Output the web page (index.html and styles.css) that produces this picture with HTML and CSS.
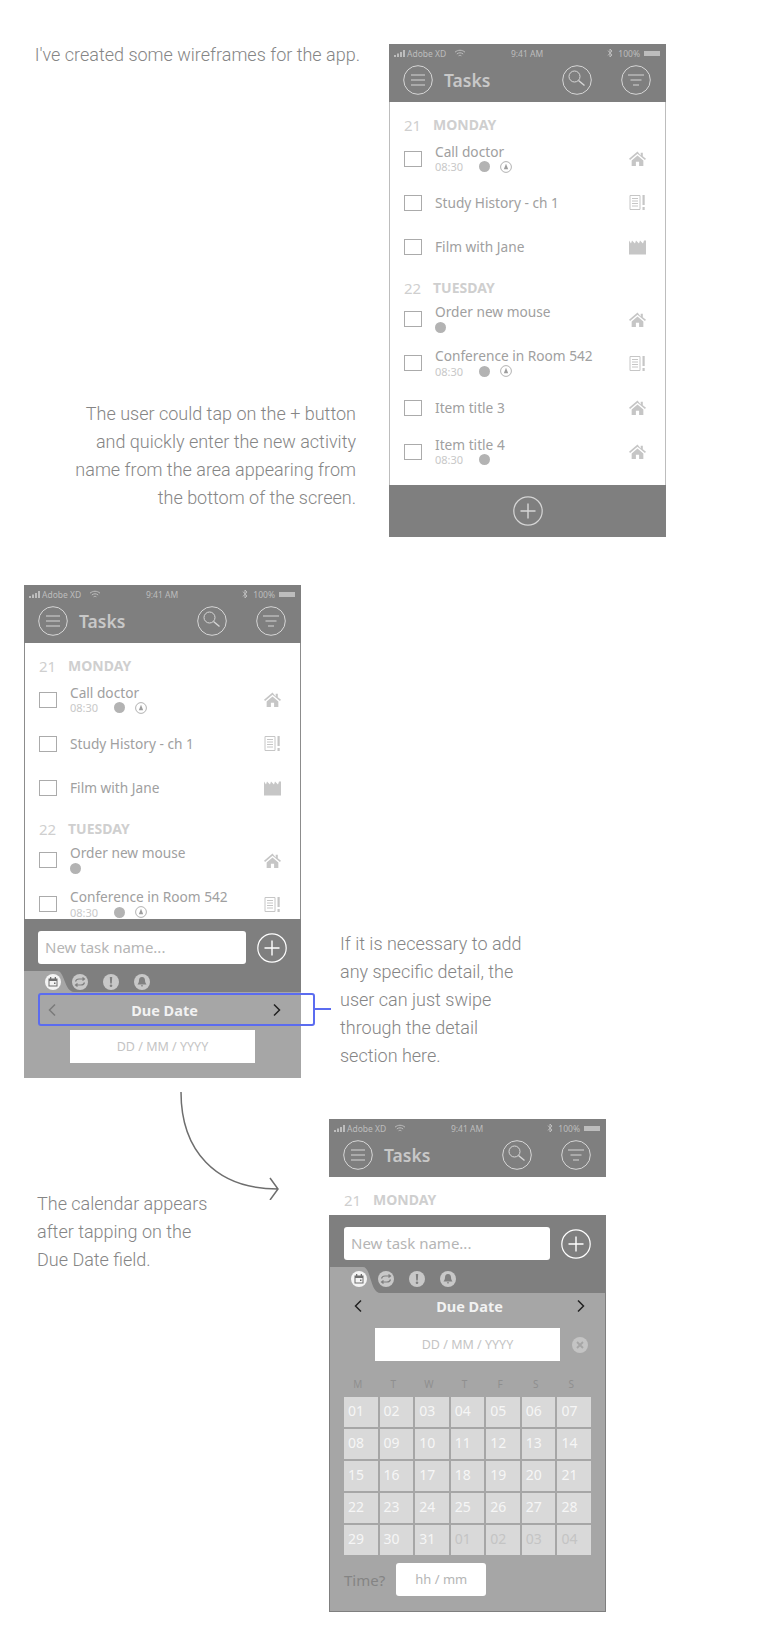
FILE: index.html
```html
<!DOCTYPE html>
<html lang="en">
<head>
    <meta charset="UTF-8">
    <meta name="viewport" content="width=device-width, initial-scale=1.0">
    <title>Tasks wireframes</title>
    <link rel="stylesheet" href="styles.css">
</head>
<body>
    <svg class="sprite" xmlns="http://www.w3.org/2000/svg">
        <symbol id="i-signal" viewBox="0 0 12 7"><path d="M0 5h2v2H0zM3 3.500h2V7H3zM6 2h2v5H6zM9 0h2v7H9z" fill="currentColor"/></symbol>
        <symbol id="i-wifi" viewBox="0 0 12 9"><path d="M1 3.200C4 .6 8 .6 11 3.200M2.800 5C4.800 3.400 7.200 3.400 9.200 5M4.600 6.800C5.500 6.200 6.500 6.200 7.400 6.800" fill="none" stroke="currentColor" stroke-width="1"/></symbol>
        <symbol id="i-bt" viewBox="0 0 6 10"><path d="M1 2.600L5 7 3 9V1l2 2L1 7.400" fill="none" stroke="currentColor" stroke-width="1"/></symbol>
        <symbol id="i-menu" viewBox="0 0 30 30"><circle cx="15" cy="15" r="14.300" fill="none" stroke="currentColor"/><path d="M8 10h14M8 15h14M8 20h14" stroke="currentColor"/></symbol>
        <symbol id="i-search" viewBox="0 0 30 30"><circle cx="15" cy="15" r="14.300" fill="none" stroke="currentColor"/><circle cx="12.500" cy="11.500" r="5.500" fill="none" stroke="currentColor"/><path d="M16.500 15.500l6 5" stroke="currentColor" stroke-width="1.400"/></symbol>
        <symbol id="i-filter" viewBox="0 0 30 30"><circle cx="15" cy="15" r="14.300" fill="none" stroke="currentColor"/><path d="M7 10h16M9.500 15h11M12 20h6" stroke="currentColor"/></symbol>
        <symbol id="i-plus" viewBox="0 0 30 30"><circle cx="15" cy="15" r="14.200" fill="none" stroke="currentColor" stroke-width="1.200"/><path d="M15 7.500v15M7.500 15h15" stroke="currentColor" stroke-width="1.400"/></symbol>
        <symbol id="i-home" viewBox="0 0 16 14"><path d="M8 .5L0 7.300l1 1L8 2.500l7 5.800 1-1-3-2.500V1.500h-2v2.600zM2.500 8.800V14h4v-4h3v4h4V8.800L8 4.200z" fill="currentColor"/></symbol>
        <symbol id="i-notes" viewBox="0 0 16 15"><path d="M.5.5h10v14H.5zM2.500 3.500h6M2.500 6h6M2.500 8.500h6M2.500 11h6" fill="none" stroke="currentColor"/><path d="M13 0h2.200v10H13zM13 12h2.200v3H13z" fill="currentColor"/></symbol>
        <symbol id="i-film" viewBox="0 0 17 14"><path d="M0 0l2 3 1-3 3 3 1-3 3 3 1-3 3 3 1-3 2 0v14H0z" fill="currentColor"/></symbol>
        <symbol id="i-bell" viewBox="0 0 12 12"><circle cx="6" cy="6" r="5.400" fill="none" stroke="currentColor" stroke-width=".8"/><path d="M6 2.800L8.200 8.200H3.800z" fill="currentColor"/></symbol>
        <symbol id="i-tab-date" viewBox="0 0 16 16"><circle cx="8" cy="8" r="8" fill="#f4f4f4"/><path d="M3.500 4.500h9v8h-9z" fill="#6f6f6f"/><path d="M4.500 7h7v4.500h-7z" fill="#f4f4f4"/><path d="M5 3h1.300v2H5zM9.700 3H11v2H9.700z" fill="#6f6f6f"/><path d="M9 8.500h1.500V10H9z" fill="#6f6f6f"/></symbol>
        <symbol id="i-tab-repeat" viewBox="0 0 16 16"><circle cx="8" cy="8" r="8" fill="#c8c8c8"/><path d="M3.500 7.500C4 5.500 5 5 7 5h5M10.500 3.500L12.500 5l-2 1.500M12.500 8.500C12 10.500 11 11 9 11H4M5.500 9.500L3.500 11l2 1.500" fill="none" stroke="#808080" stroke-width="1.200"/></symbol>
        <symbol id="i-tab-alert" viewBox="0 0 16 16"><circle cx="8" cy="8" r="8" fill="#c8c8c8"/><path d="M6.800 3h2.400l-.4 6.500H7.200z" fill="#808080"/><circle cx="8" cy="11.800" r="1.300" fill="#808080"/></symbol>
        <symbol id="i-tab-bell" viewBox="0 0 16 16"><circle cx="8" cy="8" r="8" fill="#c8c8c8"/><path d="M8 3c2.200 0 3 1.800 3 3.500 0 2 1 3 1.500 4h-9c.5-1 1.500-2 1.500-4C5 4.800 5.800 3 8 3zM6.800 11.300h2.400L8 13z" fill="#808080"/></symbol>
        <symbol id="i-left" viewBox="0 0 10 14"><path d="M8 1.500L2.500 7 8 12.500" fill="none" stroke="currentColor" stroke-width="1.500"/></symbol>
        <symbol id="i-right" viewBox="0 0 10 14"><path d="M2 1.500L7.500 7 2 12.500" fill="none" stroke="currentColor" stroke-width="1.500"/></symbol>
        <symbol id="i-clear" viewBox="0 0 16 16"><circle cx="8" cy="8" r="8" fill="#c4c4c4"/><path d="M5 5l6 6M11 5l-6 6" stroke="#a6a6a6" stroke-width="1.800"/></symbol>
        <symbol id="i-tab-shape" viewBox="0 0 50 26" preserveAspectRatio="none"><path d="M0 0H33C41 0 40 25 50 26H0z" fill="#a6a6a6"/></symbol>
    </svg>

    <div class="row row-one">
        <div class="notes">
            <p class="caption caption-top">I've created some wireframes for the app.</p>
            <p class="caption">The user could tap on the + button<br>and quickly enter the new activity<br>name from the area appearing from<br>the bottom of the screen.</p>
        </div>
        <div class="phone">
            <div class="top">
                <div class="status">
                    <div class="status-left"><svg class="s-signal"><use href="#i-signal"/></svg><span>Adobe XD</span><svg class="s-wifi"><use href="#i-wifi"/></svg></div>
                    <span class="status-time">9:41 AM</span>
                    <div class="status-right"><svg class="s-bt"><use href="#i-bt"/></svg><span>100%</span><span class="battery"></span></div>
                </div>
                <div class="toolbar">
                    <svg class="round"><use href="#i-menu"/></svg>
                    <h1 class="title">Tasks</h1>
                    <svg class="round"><use href="#i-search"/></svg>
                    <svg class="round"><use href="#i-filter"/></svg>
                </div>
            </div>
            <div class="list">
                <div class="day"><span class="day-num">21</span><span class="day-name">MONDAY</span></div>
                <div class="item"><span class="check"></span><div class="item-text"><p class="item-title">Call doctor</p><div class="meta"><span class="time">08:30</span><span class="dot"></span><svg class="bell"><use href="#i-bell"/></svg></div></div><svg class="kind"><use href="#i-home"/></svg></div>
                <div class="item"><span class="check"></span><div class="item-text"><p class="item-title">Study History - ch 1</p></div><svg class="kind"><use href="#i-notes"/></svg></div>
                <div class="item"><span class="check"></span><div class="item-text"><p class="item-title">Film with Jane</p></div><svg class="kind"><use href="#i-film"/></svg></div>
                <div class="day"><span class="day-num">22</span><span class="day-name">TUESDAY</span></div>
                <div class="item"><span class="check"></span><div class="item-text"><p class="item-title">Order new mouse</p><div class="meta"><span class="dot"></span></div></div><svg class="kind"><use href="#i-home"/></svg></div>
                <div class="item"><span class="check"></span><div class="item-text"><p class="item-title">Conference in Room 542</p><div class="meta"><span class="time">08:30</span><span class="dot"></span><svg class="bell"><use href="#i-bell"/></svg></div></div><svg class="kind"><use href="#i-notes"/></svg></div>
                <div class="item"><span class="check"></span><div class="item-text"><p class="item-title">Item title 3</p></div><svg class="kind"><use href="#i-home"/></svg></div>
                <div class="item"><span class="check"></span><div class="item-text"><p class="item-title">Item title 4</p><div class="meta"><span class="time">08:30</span><span class="dot"></span></div></div><svg class="kind"><use href="#i-home"/></svg></div>
            </div>
            <div class="footer"><svg class="round"><use href="#i-plus"/></svg></div>
        </div>
    </div>

    <div class="row row-two">
        <div class="phone">
            <div class="top">
                <div class="status">
                    <div class="status-left"><svg class="s-signal"><use href="#i-signal"/></svg><span>Adobe XD</span><svg class="s-wifi"><use href="#i-wifi"/></svg></div>
                    <span class="status-time">9:41 AM</span>
                    <div class="status-right"><svg class="s-bt"><use href="#i-bt"/></svg><span>100%</span><span class="battery"></span></div>
                </div>
                <div class="toolbar">
                    <svg class="round"><use href="#i-menu"/></svg>
                    <h1 class="title">Tasks</h1>
                    <svg class="round"><use href="#i-search"/></svg>
                    <svg class="round"><use href="#i-filter"/></svg>
                </div>
            </div>
            <div class="list list-dark-edge">
                <div class="day"><span class="day-num">21</span><span class="day-name">MONDAY</span></div>
                <div class="item"><span class="check"></span><div class="item-text"><p class="item-title">Call doctor</p><div class="meta"><span class="time">08:30</span><span class="dot"></span><svg class="bell"><use href="#i-bell"/></svg></div></div><svg class="kind"><use href="#i-home"/></svg></div>
                <div class="item"><span class="check"></span><div class="item-text"><p class="item-title">Study History - ch 1</p></div><svg class="kind"><use href="#i-notes"/></svg></div>
                <div class="item"><span class="check"></span><div class="item-text"><p class="item-title">Film with Jane</p></div><svg class="kind"><use href="#i-film"/></svg></div>
                <div class="day"><span class="day-num">22</span><span class="day-name">TUESDAY</span></div>
                <div class="item"><span class="check"></span><div class="item-text"><p class="item-title">Order new mouse</p><div class="meta"><span class="dot"></span></div></div><svg class="kind"><use href="#i-home"/></svg></div>
                <div class="item"><span class="check"></span><div class="item-text"><p class="item-title">Conference in Room 542</p><div class="meta"><span class="time">08:30</span><span class="dot"></span><svg class="bell"><use href="#i-bell"/></svg></div></div><svg class="kind"><use href="#i-notes"/></svg></div>
            </div>
            <div class="composer">
                <div class="new-task"><div class="field">New task name...</div><svg class="round round-bright"><use href="#i-plus"/></svg></div>
                <div class="tabs tabs-short">
                    <svg class="tab-shape"><use href="#i-tab-shape"/></svg>
                    <svg class="tab-icon"><use href="#i-tab-date"/></svg>
                    <svg class="tab-icon"><use href="#i-tab-repeat"/></svg>
                    <svg class="tab-icon"><use href="#i-tab-alert"/></svg>
                    <svg class="tab-icon"><use href="#i-tab-bell"/></svg>
                </div>
                <div class="details">
                    <div class="due due-swipe">
                        <svg class="chev chev-off"><use href="#i-left"/></svg>
                        <span class="due-label">Due Date</span>
                        <svg class="chev"><use href="#i-right"/></svg>
                        <div class="callout"></div>
                    </div>
                    <div class="date-row"><span></span><div class="date-field">DD / MM / YYYY</div><span></span></div>
                </div>
            </div>
        </div>
        <p class="caption caption-side">If it is necessary to add<br>any specific detail, the<br>user can just swipe<br>through the detail<br>section here.</p>
    </div>

    <div class="row row-three">
        <p class="caption caption-low">The calendar appears<br>after tapping on the<br>Due Date field.</p>
        <svg class="arrow" viewBox="0 0 110 115">
            <path d="M6 7C6 65 40 104 103 104M95 93l8 11-8 11" fill="none" stroke="#6e6e6e" stroke-width="1.500"/>
        </svg>
        <div class="phone">
            <div class="top">
                <div class="status">
                    <div class="status-left"><svg class="s-signal"><use href="#i-signal"/></svg><span>Adobe XD</span><svg class="s-wifi"><use href="#i-wifi"/></svg></div>
                    <span class="status-time">9:41 AM</span>
                    <div class="status-right"><svg class="s-bt"><use href="#i-bt"/></svg><span>100%</span><span class="battery"></span></div>
                </div>
                <div class="toolbar">
                    <svg class="round"><use href="#i-menu"/></svg>
                    <h1 class="title">Tasks</h1>
                    <svg class="round"><use href="#i-search"/></svg>
                    <svg class="round"><use href="#i-filter"/></svg>
                </div>
            </div>
            <div class="list list-none">
                <div class="day"><span class="day-num">21</span><span class="day-name">MONDAY</span></div>
            </div>
            <div class="composer composer-full">
                <div class="new-task"><div class="field">New task name...</div><svg class="round round-bright"><use href="#i-plus"/></svg></div>
                <div class="tabs">
                    <svg class="tab-shape"><use href="#i-tab-shape"/></svg>
                    <svg class="tab-icon"><use href="#i-tab-date"/></svg>
                    <svg class="tab-icon"><use href="#i-tab-repeat"/></svg>
                    <svg class="tab-icon"><use href="#i-tab-alert"/></svg>
                    <svg class="tab-icon"><use href="#i-tab-bell"/></svg>
                </div>
                <div class="details">
                    <div class="due">
                        <svg class="chev"><use href="#i-left"/></svg>
                        <span class="due-label">Due Date</span>
                        <svg class="chev"><use href="#i-right"/></svg>
                    </div>
                    <div class="date-row"><span></span><div class="date-field">DD / MM / YYYY</div><svg class="clear"><use href="#i-clear"/></svg></div>
                    <div class="week"><span>M</span><span>T</span><span>W</span><span>T</span><span>F</span><span>S</span><span>S</span></div>
                    <div class="month">
                        <span>01</span><span>02</span><span>03</span><span>04</span><span>05</span><span>06</span><span>07</span>
                        <span>08</span><span>09</span><span>10</span><span>11</span><span>12</span><span>13</span><span>14</span>
                        <span>15</span><span>16</span><span>17</span><span>18</span><span>19</span><span>20</span><span>21</span>
                        <span>22</span><span>23</span><span>24</span><span>25</span><span>26</span><span>27</span><span>28</span>
                        <span>29</span><span>30</span><span>31</span><span class="other">01</span><span class="other">02</span><span class="other">03</span><span class="other">04</span>
                    </div>
                    <div class="time-row"><span class="time-label">Time?</span><div class="time-field">hh / mm</div></div>
                </div>
            </div>
        </div>
    </div>
</body>
</html>
```

FILE: styles.css
```css
body {
    margin: 0;
    background-color: white;
    font-family: 'Noto Sans', sans-serif;
}
p, h1 {
    margin: 0;
}
.sprite {
    display: none;
}
.row {
    display: flex;
}
.row-one {
    padding-top: 44px;
}
.row-two {
    margin-top: 48px;
    padding-left: 24px;
    align-items: flex-end;
}
.row-three {
    position: relative;
    margin-top: 41px;
    padding-left: 37px;
    padding-bottom: 34px;
}
.notes {
    width: 356px;
    margin-right: 33px;
    padding-bottom: 25px;
    display: flex;
    flex-direction: column;
    justify-content: space-between;
    text-align: right;
}
.caption {
    font-family: Roboto, sans-serif;
    font-weight: 300;
    font-size: 18px;
    line-height: 28px;
    color: #858585;
}
.caption-top {
    margin: -3px -4px 0 0;
}
.caption-side {
    margin-left: 39px;
    padding-bottom: 8px;
}
.caption-low {
    width: 292px;
    margin-top: 71px;
}
.arrow {
    position: absolute;
    left: 175px;
    top: -34px;
    width: 110px;
    height: 115px;
}

/* phone frame */
.phone {
    width: 277px;
    height: 493px;
    display: flex;
    flex-direction: column;
    flex-shrink: 0;
}
.top {
    height: 58px;
    flex-shrink: 0;
    background: #7f7f7f;
    color: #d6d6d6;
}
.status {
    height: 18px;
    padding: 0 6px 0 5px;
    display: grid;
    grid-template-columns: 1fr auto 1fr;
    align-items: center;
    font-size: 8.5px;
    color: #bdbdbd;
}
.status-left, .status-right {
    display: flex;
    align-items: center;
}
.status-right {
    justify-content: flex-end;
}
.s-signal {
    width: 12px;
    height: 7px;
    margin-right: 1px;
}
.s-wifi {
    width: 12px;
    height: 9px;
    margin-left: 8px;
}
.s-bt {
    width: 6px;
    height: 10px;
    margin-right: 5px;
}
.battery {
    width: 16px;
    height: 5px;
    margin-left: 4px;
    background: #bdbdbd;
}
.toolbar {
    height: 36px;
    padding: 0 15px 0 14px;
    display: flex;
    align-items: center;
    gap: 29px;
}
.title {
    flex: 1;
    margin-left: -18px;
    font-size: 17.5px;
    font-weight: 600;
    color: #c8c8c8;
}
.round {
    width: 30px;
    height: 30px;
    flex-shrink: 0;
    color: #d6d6d6;
}
.round-bright {
    color: white;
}

/* task list */
.list {
    flex: 1;
    min-height: 0;
    overflow: hidden;
    background: white;
    padding-top: 7px;
    border-left: 1px solid #bdbdbd;
    border-right: 1px solid #bdbdbd;
}
.list-dark-edge {
    border-color: #8c8c8c;
}
.list-none {
    border: none;
    padding: 7px 0 0 1px;
}
.day {
    height: 27.5px;
    box-sizing: border-box;
    padding: 9px 0 0 14px;
    display: flex;
    font-size: 14px;
    line-height: 20px;
    color: #cfcfcf;
}
.day:first-child {
    padding-top: 6px;
}
.day-num {
    width: 29px;
    font-size: 15px;
}
.day-name {
    font-weight: 700;
}
.item {
    height: 44.3px;
    padding: 0 19px 0 14px;
    display: flex;
    align-items: center;
}
.check {
    width: 18px;
    height: 16px;
    border: 1px solid #ababab;
    box-sizing: border-box;
    flex-shrink: 0;
}
.item-text {
    flex: 1;
    margin-left: 13px;
}
.item-title {
    font-size: 13.7px;
    line-height: 18px;
    color: #a0a0a0;
}
.meta {
    height: 12px;
    margin-bottom: 2px;
    display: flex;
    align-items: center;
}
.time {
    width: 44px;
    font-size: 11px;
    color: #c8c8c8;
}
.dot {
    width: 11px;
    height: 11px;
    border-radius: 50%;
    background: #b3b3b3;
}
.bell {
    width: 12px;
    height: 12px;
    margin-left: 10px;
    color: #9e9e9e;
}
.kind {
    width: 17px;
    height: 15px;
    color: #c6c6c6;
}
.footer {
    height: 52px;
    flex-shrink: 0;
    background: #7f7f7f;
    display: flex;
    align-items: center;
    justify-content: center;
}

/* new task panel */
.composer {
    flex-shrink: 0;
    background: #7f7f7f;
}
.composer-full {
    border-left: 1px solid #7f7f7f;
    border-right: 1px solid #7f7f7f;
    border-bottom: 1px solid #7f7f7f;
}
.new-task {
    padding: 12px 14px 0;
    display: flex;
    align-items: center;
    gap: 11px;
}
.field {
    flex: 1;
    height: 33px;
    padding-left: 7px;
    background: white;
    border-radius: 3px;
    font-size: 15px;
    line-height: 33px;
    color: #b5b5b5;
}
.tabs {
    position: relative;
    height: 26px;
    margin-top: 7px;
    padding-left: 21px;
    display: flex;
    align-items: flex-start;
    padding-top: 4px;
    box-sizing: border-box;
    gap: 15px;
}
.tabs-short {
    height: 21px;
    padding-top: 3px;
}
.tab-shape {
    position: absolute;
    left: 0;
    top: 0;
    width: 50px;
    height: 100%;
}
.tab-icon {
    position: relative;
    width: 16px;
    height: 16px;
}
.tab-shape + .tab-icon {
    margin-right: -4px;
}
.details {
    background: #a6a6a6;
}
.due {
    position: relative;
    height: 26px;
    padding: 0 19px 0 23px;
    display: flex;
    align-items: center;
    justify-content: space-between;
}
.due-swipe {
    height: 36px;
}
.due-label {
    font-size: 14.5px;
    font-weight: 700;
    color: #f2f2f2;
}
.chev {
    width: 10px;
    height: 14px;
    color: #222222;
}
.chev-off {
    color: #7a7a7a;
}
.callout {
    position: absolute;
    left: 14px;
    top: 1px;
    width: 277px;
    height: 33px;
    box-sizing: border-box;
    border: 2px solid #5b6cf0;
    border-radius: 3px;
}
.callout::after {
    content: '';
    position: absolute;
    left: 100%;
    top: 13px;
    width: 18px;
    height: 2px;
    background: #5b6cf0;
}
.date-row {
    display: grid;
    grid-template-columns: 1fr 185px 1fr;
    align-items: center;
    padding-top: 9px;
}
.due-swipe + .date-row {
    padding-top: 2px;
    padding-bottom: 15px;
}
.date-field {
    height: 33px;
    background: white;
    font-size: 12.5px;
    line-height: 33px;
    text-align: center;
    color: #c4c4c4;
}
.clear {
    width: 16px;
    height: 16px;
    margin-left: 12px;
}
.week {
    margin: 16px 17px 6px 11px;
    display: grid;
    grid-template-columns: repeat(7, 1fr);
    gap: 2px;
    font-size: 10px;
    line-height: 14px;
    text-align: center;
    color: #8f8f8f;
}
.month {
    margin: 0 14px;
    display: grid;
    grid-template-columns: repeat(7, 1fr);
    grid-auto-rows: 30px;
    gap: 2px;
}
.month span {
    background: #d9d9d9;
    padding: 4px 0 0 4px;
    box-sizing: border-box;
    font-size: 14px;
    line-height: 20px;
    color: #f6f6f6;
}
.month span.other {
    color: #c4c4c4;
}
.time-row {
    margin-top: 8px;
    padding: 0 14px 15px;
    display: flex;
    align-items: center;
    gap: 11px;
}
.time-label {
    font-size: 15px;
    color: #848484;
}
.time-field {
    width: 90px;
    height: 33px;
    background: white;
    border-radius: 3px;
    font-size: 13px;
    line-height: 33px;
    text-align: center;
    color: #b5b5b5;
}
```
